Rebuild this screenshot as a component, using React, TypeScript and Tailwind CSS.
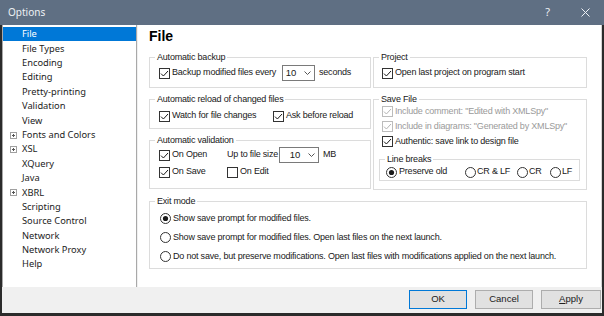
import React from "react";

const navItems: { label: string; expandable?: boolean }[] = [
  { label: "File" },
  { label: "File Types" },
  { label: "Encoding" },
  { label: "Editing" },
  { label: "Pretty-printing" },
  { label: "Validation" },
  { label: "View" },
  { label: "Fonts and Colors", expandable: true },
  { label: "XSL", expandable: true },
  { label: "XQuery" },
  { label: "Java" },
  { label: "XBRL", expandable: true },
  { label: "Scripting" },
  { label: "Source Control" },
  { label: "Network" },
  { label: "Network Proxy" },
  { label: "Help" },
];

function Check({ checked, disabled }: { checked?: boolean; disabled?: boolean }) {
  const stroke = disabled ? "#bcbcbc" : "#333333";
  const mark = disabled ? "#b4b4b4" : "#1a1a1a";
  return (
    <svg width="11" height="11" viewBox="0 0 11 11" className="shrink-0">
      <rect x="0.5" y="0.5" width="10" height="10" fill="#fff" stroke={stroke} />
      {checked && <path d="M2 5.6 L4.4 8 L9 3" fill="none" stroke={mark} strokeWidth="1" />}
    </svg>
  );
}

function Radio({ checked }: { checked?: boolean }) {
  return (
    <svg width="11" height="11" viewBox="0 0 11 11" className="shrink-0">
      <circle cx="5.5" cy="5.5" r="5" fill="#fff" stroke="#333333" />
      {checked && <circle cx="5.5" cy="5.5" r="2.6" fill="#1a1a1a" />}
    </svg>
  );
}

function Combo({ width }: { width: string }) {
  return (
    <div className={`flex h-[16px] ${width} items-center justify-end gap-[8px] border border-[#7a7a7a] bg-white pr-[3px]`}>
      <span className="text-[9.5px]">10</span>
      <svg width="7" height="4" viewBox="0 0 7 4">
        <path d="M0.5 0.5 L3.5 3.5 L6.5 0.5" fill="none" stroke="#555" strokeWidth="1" />
      </svg>
    </div>
  );
}

function CheckRow({ label, checked = true, disabled, className = "" }: { label: string; checked?: boolean; disabled?: boolean; className?: string }) {
  return (
    <div className={`flex items-center gap-[2px] ${className}`}>
      <Check checked={checked} disabled={disabled} />
      <span className={disabled ? "text-[#9a9a9a]" : ""}>{label}</span>
    </div>
  );
}

function Group({ title, className = "", children }: { title: string; className?: string; children?: React.ReactNode }) {
  return (
    <fieldset className={`border border-[#dcdcdc] ${className}`}>
      <legend className="ml-[5px] px-[2px] leading-[10px]">{title}</legend>
      {children}
    </fieldset>
  );
}

export default function App() {
  return (
    <div className="flex h-[316px] w-[604px] flex-col bg-[#2b2b2b]">
      <div className="flex h-[25px] shrink-0 items-center bg-[#5f6f83] pl-[8px] font-['Noto_Sans',sans-serif] text-[10px] text-[#eef1f5]">
        <span>Options</span>
        <span className="ml-auto mr-[31px] text-[11px]">?</span>
        <svg width="9" height="9" viewBox="0 0 9 9" className="mr-[14px]">
          <path d="M0.5 0.5 L8.5 8.5 M8.5 0.5 L0.5 8.5" stroke="#eef1f5" strokeWidth="1" />
        </svg>
      </div>

      <div className="mx-[2px] mb-[3px] flex flex-1 flex-col bg-[#f0f0f0]">
        <div className="flex h-[262px] shrink-0">
          <ul className="w-[135px] shrink-0 border-x border-[#a9a9a9] bg-white pt-[2px] font-['Noto_Sans',sans-serif] text-[9.3px] text-[#1c1c1c]">
            {navItems.map((item, i) => (
              <li
                key={item.label}
                className={`relative flex h-[14.4px] items-center pl-[19px] ${i === 0 ? "bg-[#0078d7] text-white" : ""}`}
              >
                {item.expandable && (
                  <svg width="7" height="7" viewBox="0 0 7 7" className="absolute left-[7px] top-[4px]">
                    <rect x="0.5" y="0.5" width="6" height="6" fill="#fff" stroke="#a0a0a0" />
                    <path d="M2 3.5 H5 M3.5 2 V5" stroke="#555" strokeWidth="1" />
                  </svg>
                )}
                {item.label}
              </li>
            ))}
          </ul>

          <div className="ml-[1px] flex-1 border-r border-[#d4d4d4] bg-white pl-[11px] pt-[3px] font-['Liberation_Sans',Arial,sans-serif] text-[9px] tracking-[-0.2px] text-[#202020]">
            <h2 className="text-[14px] font-bold leading-[16px] tracking-normal text-black">File</h2>

            <div className="mt-[8px] flex gap-[2px]">
              <div className="flex w-[222px] flex-col gap-[6px]">
                <Group title="Automatic backup" className="h-[36px]">
                  <div className="mt-[3px] flex h-[16px] items-center pl-[9px]">
                    <CheckRow label="Backup modified files every" className="w-[123px]" />
                    <Combo width="w-[33px]" />
                    <span className="ml-[4px]">seconds</span>
                  </div>
                </Group>

                <Group title="Automatic reload of changed files" className="h-[35px]">
                  <div className="mt-[4px] flex h-[16px] items-center pl-[9px]">
                    <CheckRow label="Watch for file changes" className="w-[114px]" />
                    <CheckRow label="Ask before reload" />
                  </div>
                </Group>

                <Group title="Automatic validation" className="h-[54px]">
                  <div className="mt-[2px] flex h-[16px] items-center pl-[9px]">
                    <CheckRow label="On Open" className="w-[68px]" />
                    <span className="w-[52px]">Up to file size</span>
                    <Combo width="w-[40px]" />
                    <span className="ml-[4px]">MB</span>
                  </div>
                  <div className="mt-[2px] flex h-[14px] items-center pl-[9px]">
                    <CheckRow label="On Save" className="w-[68px]" />
                    <CheckRow label="On Edit" checked={false} />
                  </div>
                </Group>
              </div>

              <div className="flex w-[214px] flex-col gap-[6px]">
                <Group title="Project" className="h-[36px]">
                  <div className="mt-[3px] flex h-[16px] items-center pl-[8px]">
                    <CheckRow label="Open last project on program start" />
                  </div>
                </Group>

                <Group title="Save File" className="h-[96px]">
                  <div className="flex flex-col pl-[8px]">
                    <CheckRow label='Include comment: "Edited with XMLSpy"' disabled className="h-[15px]" />
                    <CheckRow label='Include in diagrams: "Generated by XMLSpy"' disabled className="h-[15px]" />
                    <CheckRow label="Authentic: save link to design file" className="h-[15px]" />
                  </div>
                  <Group title="Line breaks" className="ml-[5px] mt-[5px] h-[27px] w-[201px]">
                    <div className="mt-[1px] flex h-[14px] items-center pl-[6px]">
                      <div className="flex w-[79px] items-center gap-[2px]">
                        <Radio checked />
                        <span>Preserve old</span>
                      </div>
                      <div className="flex w-[52px] items-center gap-[1px]">
                        <Radio />
                        <span>CR &amp; LF</span>
                      </div>
                      <div className="flex w-[33px] items-center gap-[1px]">
                        <Radio />
                        <span>CR</span>
                      </div>
                      <div className="flex items-center gap-[1px]">
                        <Radio />
                        <span>LF</span>
                      </div>
                    </div>
                  </Group>
                </Group>
              </div>
            </div>

            <Group title="Exit mode" className="mt-[6px] h-[73px] w-[438px]">
              <div className="mt-[3px] flex flex-col pl-[10px]">
                <div className="flex h-[19px] items-center gap-[2px]">
                  <Radio checked />
                  <span>Show save prompt for modified files.</span>
                </div>
                <div className="flex h-[19px] items-center gap-[2px]">
                  <Radio />
                  <span>Show save prompt for modified files. Open last files on the next launch.</span>
                </div>
                <div className="flex h-[19px] items-center gap-[2px]">
                  <Radio />
                  <span>Do not save, but preserve modifications. Open last files with modifications applied on the next launch.</span>
                </div>
              </div>
            </Group>
          </div>
        </div>

        <div className="flex flex-1 items-start justify-end gap-[8px] pr-[1px] pt-[3px] font-['Liberation_Sans',Arial,sans-serif] text-[9.5px] text-[#202020]">
          <button className="h-[19px] w-[58px] border border-[#0078d7] bg-[#e1e1e1]">OK</button>
          <button className="h-[19px] w-[58px] border border-[#adadad] bg-[#e1e1e1]">Cancel</button>
          <button className="h-[19px] w-[60px] border border-[#adadad] bg-[#e1e1e1]">
            <span className="underline">A</span>pply
          </button>
        </div>
      </div>
    </div>
  );
}
